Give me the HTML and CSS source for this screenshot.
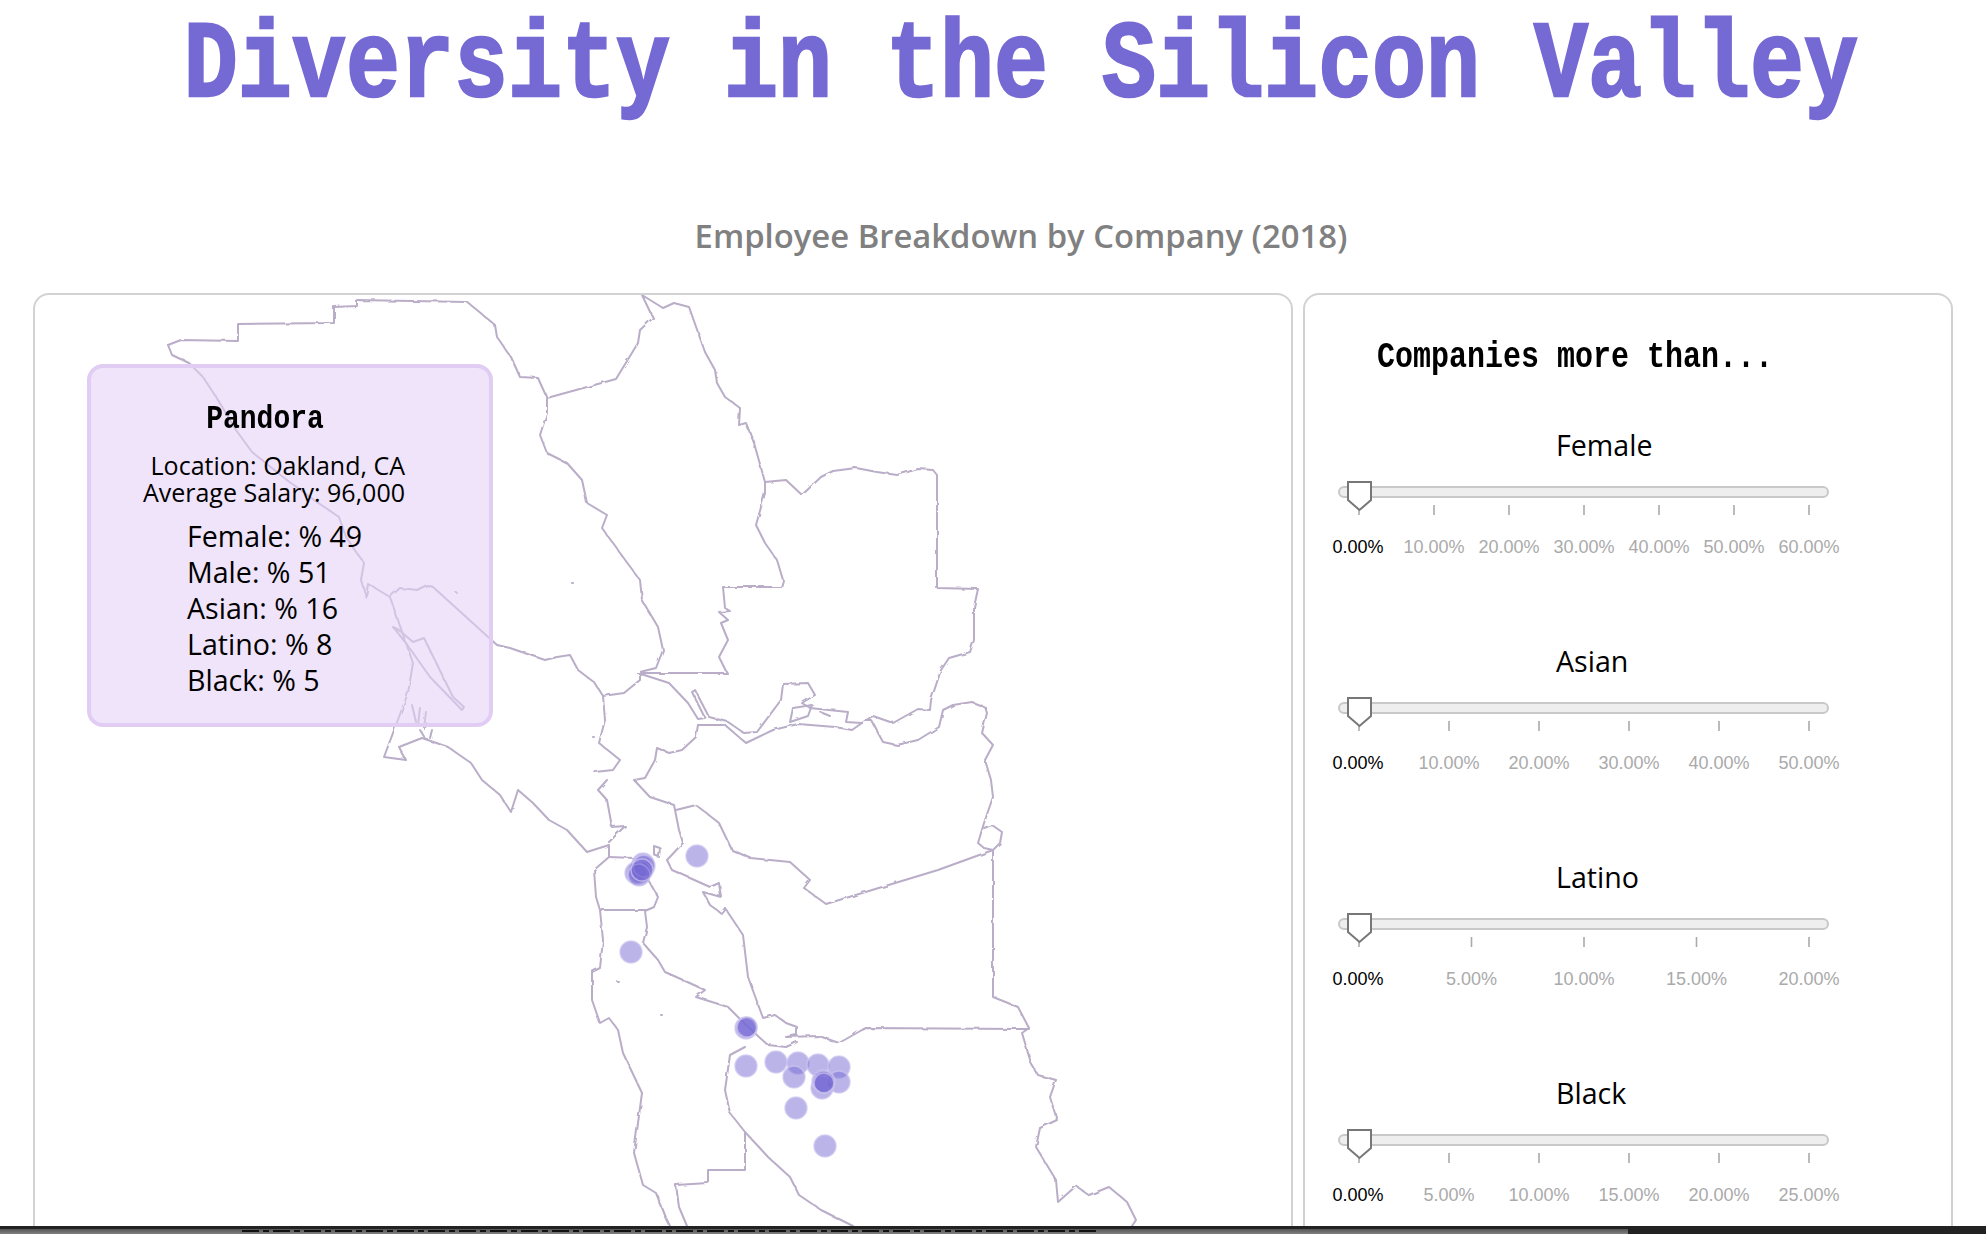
FILE: index.html
```html
<!DOCTYPE html>
<html lang="en">
<head>
    <meta charset="UTF-8">
    <title>Diversity in the Silicon Valley</title>
    <link rel="stylesheet" href="styles.css">
</head>
<body>
    <div class="header">
        <h1 class="title">Diversity in the Silicon Valley</h1>
        <h2 class="subtitle">Employee Breakdown by Company (2018)</h2>
    </div>

    <div class="panels">
        <div class="panel map-panel">
            <svg class="map" viewBox="35 295 1256 960">
                <defs>
                    <filter id="rough" x="35" y="295" width="1256" height="960" filterUnits="userSpaceOnUse">
                        <feTurbulence type="fractalNoise" baseFrequency="0.1" numOctaves="2" seed="4"/>
                        <feDisplacementMap in="SourceGraphic" scale="3"/>
                    </filter>
                </defs>
                <g class="county">
                    <path d="M168 345L181 340L238 341L238 324L334 323L334 307L357 306L357 300L467 302L477 310L495 325L497 337L511 357L520 377L538 378L547 398L547 413L540 435L547 453L567 463L582 480L587 503L607 515L602 528L620 553L640 580L642 600L658 627L663 650L656 668L640 672"/>
                    <path d="M547 398L616 379L638 343L640 330L653 318L642 295L663 308L674 303L689 307L705 352L715 370L717 383L725 397L740 408L739 425L746 423L754 443L765 482"/>
                    <path d="M765 482L786 480L802 495L821 477L833 471L856 468L877 472L897 475L918 469L933 470L937 475L937 588L978 589L974 607L974 640L970 652L949 658L941 670L931 700L930 710L918 709L893 723L873 716L866 720"/>
                    <path d="M765 482L765 493L756 525L765 543L777 560L783 580L781 587L723 587L725 608L730 611L719 612L728 620L721 623L728 640L719 657L727 673L638 673"/>
                    <path d="M640 673L640 680L624 693L603 696L595 683L578 670L570 655L557 657L545 660L510 648L497 645L433 587L427 585L417 590L400 588L390 597"/>
                    <path d="M168 345L172 355L189 363L203 377L218 400L236 430L252 452L283 477L314 500L339 517L346 537L364 563L361 580L366 597L368 584L375 588L390 597L399 623L413 663L408 693L384 757L406 760L399 747L422 738L448 747L471 763L482 780L500 795L511 812L518 790L533 803L549 820L567 830L587 852L609 845L609 857L594 870L596 897L600 910L603 940L600 968L592 972L592 1000L600 1023L609 1018L618 1030L623 1053L642 1093L634 1153L643 1185L656 1193L667 1220L670 1226"/>
                    <path d="M393 627L406 643L430 677L462 710L464 707L453 697L424 638L413 642L399 630Z"/>
                    <path d="M412 705L416 722M420 708L418 725M426 712L424 728M420 730L425 738M432 730L430 738"/>
                    <path d="M600 910L647 910"/>
                    <path d="M609 857L634 858L650 883L658 897L654 907L645 911L647 927L643 943L658 960L665 972L683 980L705 990L696 997L728 1007L743 1022L759 1037L768 1045L786 1047L797 1042"/>
                    <path d="M745 1047L730 1055L725 1090L730 1113L745 1132L768 1157L790 1177L799 1195L821 1210L853 1226"/>
                    <path d="M745 1132L745 1170L708 1170L708 1183L676 1185L679 1207L687 1226"/>
                    <path d="M725 908L743 935L748 977L763 1018L775 1015L786 1023L797 1027L797 1035L786 1037L819 1036L839 1043L862 1030L866 1028L1029 1029"/>
                    <path d="M676 810L696 805L719 823L732 850L750 858L790 862L810 880L804 888L826 904L938 870L993 850L993 997L1018 1007L1029 1028L1022 1033L1031 1063L1038 1075L1056 1080L1050 1097L1057 1120L1040 1128L1036 1147L1056 1180L1058 1202L1076 1186L1089 1195L1109 1187L1127 1202L1136 1220L1132 1226"/>
                    <path d="M985 707L987 713L982 733L993 745L985 760L991 780L993 797L984 823L978 843L984 848L993 850"/>
                    <path d="M985 707L972 702L953 705L943 710L939 727L918 740L897 745L883 742L871 720L866 720"/>
                    <path d="M984 828L992 825L1002 832L1000 843L993 850"/>
                    <path d="M638 673L669 683L688 703L698 719L705 718L692 692L695 690L709 717L728 722L744 733L757 732L781 700L783 684L808 683L815 695L802 703L810 708L848 712L846 722L862 723L866 720"/>
                    <path d="M790 722L793 708L812 705L808 716L790 722M820 712L830 716"/>
                    <path d="M698 725L725 725L746 743L773 730L798 724L835 727L852 730L862 723"/>
                    <path d="M698 725L696 737L682 750L669 753L657 748L655 760L645 778L634 780L650 797L674 805L679 830L683 843L667 860L672 870L710 887L719 883L721 897L703 892L710 905L721 913L725 908"/>
                    <path d="M603 696L605 720L599 743L620 760L613 770L595 772M607 780L598 790L607 800L612 827L625 826L609 842"/>
                    <path d="M654 846L660 848L659 857L654 855Z"/>
                    <path d="M618 982H619M572 583H573M456 593H457M593 737H594M661 1015H662"/>
                </g>
                <g class="dots">
                    <circle cx="697" cy="856" r="11"/>
                    <circle cx="643" cy="864" r="11"/>
                    <circle cx="642" cy="867" r="11"/>
                    <circle cx="641" cy="869" r="11"/>
                    <circle cx="640" cy="872" r="11"/>
                    <circle cx="636" cy="873" r="11"/>
                    <circle cx="644" cy="866" r="11"/>
                    <circle cx="639" cy="875" r="11"/>
                    <circle cx="642" cy="870" r="11"/>
                    <circle cx="631" cy="952" r="11"/>
                    <circle cx="746" cy="1028" r="11"/>
                    <circle cx="746" cy="1028" r="10"/>
                    <circle cx="747" cy="1027" r="10"/>
                    <circle cx="746" cy="1066" r="11"/>
                    <circle cx="776" cy="1062" r="11"/>
                    <circle cx="798" cy="1063" r="11"/>
                    <circle cx="794" cy="1077" r="11"/>
                    <circle cx="818" cy="1065" r="11"/>
                    <circle cx="839" cy="1067" r="11"/>
                    <circle cx="839" cy="1082" r="11"/>
                    <circle cx="822" cy="1088" r="11"/>
                    <circle cx="823" cy="1081" r="11"/>
                    <circle cx="824" cy="1082" r="11"/>
                    <circle cx="824" cy="1083" r="10"/>
                    <circle cx="796" cy="1108" r="11"/>
                    <circle cx="825" cy="1146" r="11"/>
                </g>
            </svg>

            <div class="tooltip">
                <h3 class="tooltip-name">Pandora</h3>
                <div class="tooltip-info">
                    <p>Location: Oakland, CA</p>
                    <p>Average Salary: 96,000</p>
                </div>
                <ul class="tooltip-stats">
                    <li>Female: % 49</li>
                    <li>Male: % 51</li>
                    <li>Asian: % 16</li>
                    <li>Latino: % 8</li>
                    <li>Black: % 5</li>
                </ul>
            </div>
        </div>

        <div class="panel filter-panel">
            <h3 class="filter-title">Companies more than...</h3>

            <div class="filter">
                <div class="filter-label">Female</div>
                <svg class="slider" width="540" height="90">
                    <rect class="track" x="9" y="12" width="489" height="10" rx="5"/>
                    <path class="tick" d="M29 30V40M104 30V40M179 30V40M254 30V40M329 30V40M404 30V40M479 30V40"/>
                    <path class="handle" d="M18 7H41V25L29.5 35L18 25Z"/>
                    <text class="tick-label active" x="28" y="78">0.00%</text>
                    <text class="tick-label" x="104" y="78">10.00%</text>
                    <text class="tick-label" x="179" y="78">20.00%</text>
                    <text class="tick-label" x="254" y="78">30.00%</text>
                    <text class="tick-label" x="329" y="78">40.00%</text>
                    <text class="tick-label" x="404" y="78">50.00%</text>
                    <text class="tick-label" x="479" y="78">60.00%</text>
                </svg>
            </div>

            <div class="filter">
                <div class="filter-label">Asian</div>
                <svg class="slider" width="540" height="90">
                    <rect class="track" x="9" y="12" width="489" height="10" rx="5"/>
                    <path class="tick" d="M29 30V40M119 30V40M209 30V40M299 30V40M389 30V40M479 30V40"/>
                    <path class="handle" d="M18 7H41V25L29.5 35L18 25Z"/>
                    <text class="tick-label active" x="28" y="78">0.00%</text>
                    <text class="tick-label" x="119" y="78">10.00%</text>
                    <text class="tick-label" x="209" y="78">20.00%</text>
                    <text class="tick-label" x="299" y="78">30.00%</text>
                    <text class="tick-label" x="389" y="78">40.00%</text>
                    <text class="tick-label" x="479" y="78">50.00%</text>
                </svg>
            </div>

            <div class="filter">
                <div class="filter-label">Latino</div>
                <svg class="slider" width="540" height="90">
                    <rect class="track" x="9" y="12" width="489" height="10" rx="5"/>
                    <path class="tick" d="M29 30V40M141.5 30V40M254 30V40M366.5 30V40M479 30V40"/>
                    <path class="handle" d="M18 7H41V25L29.5 35L18 25Z"/>
                    <text class="tick-label active" x="28" y="78">0.00%</text>
                    <text class="tick-label" x="141.5" y="78">5.00%</text>
                    <text class="tick-label" x="254" y="78">10.00%</text>
                    <text class="tick-label" x="366.5" y="78">15.00%</text>
                    <text class="tick-label" x="479" y="78">20.00%</text>
                </svg>
            </div>

            <div class="filter">
                <div class="filter-label">Black</div>
                <svg class="slider" width="540" height="90">
                    <rect class="track" x="9" y="12" width="489" height="10" rx="5"/>
                    <path class="tick" d="M29 30V40M119 30V40M209 30V40M299 30V40M389 30V40M479 30V40"/>
                    <path class="handle" d="M18 7H41V25L29.5 35L18 25Z"/>
                    <text class="tick-label active" x="28" y="78">0.00%</text>
                    <text class="tick-label" x="119" y="78">5.00%</text>
                    <text class="tick-label" x="209" y="78">10.00%</text>
                    <text class="tick-label" x="299" y="78">15.00%</text>
                    <text class="tick-label" x="389" y="78">20.00%</text>
                    <text class="tick-label" x="479" y="78">25.00%</text>
                </svg>
            </div>
        </div>
    </div>

    <div class="window-edge">
        <div class="window-edge-gray">
            <div class="window-edge-text"></div>
        </div>
    </div>
</body>
</html>
```

FILE: styles.css
```css
* {
    box-sizing: border-box;
    margin: 0;
    padding: 0;
}

html,
body {
    height: 100%;
    overflow: hidden;
}

body {
    position: relative;
    background-color: white;
    font-family: 'Open Sans', 'Noto Sans', sans-serif;
    color: black;
}

.header {
    height: 293px;
    padding-left: 56px;
    text-align: center;
}

.title {
    height: 150px;
    padding-top: 5px;
    font-family: 'Liberation Mono', monospace;
    font-size: 90px;
    line-height: 100px;
    font-weight: bold;
    color: #7569d4;
    -webkit-text-stroke: 2px #7569d4;
    transform: scaleY(1.22);
    transform-origin: top;
}

.subtitle {
    padding-top: 64px;
    font-size: 32.8px;
    line-height: 44px;
    font-weight: 600;
    color: #808080;
}

.panels {
    display: grid;
    grid-template-columns: 1260px 650px;
    gap: 10px;
    padding-left: 33px;
}

.panel {
    position: relative;
    height: 1000px;
    border: 2px solid #d2d2d2;
    border-radius: 16px;
    overflow: hidden;
}

.map {
    display: block;
    width: 1256px;
    height: 960px;
}

.county {
    filter: url(#rough);
}

.county path {
    fill: none;
    stroke: #b9adc8;
    stroke-width: 2;
    stroke-linejoin: round;
    stroke-linecap: round;
}

.dots circle {
    fill: #7569d4;
    fill-opacity: 0.5;
    stroke: #cfc6f0;
    stroke-width: 1.5;
    stroke-opacity: 0.7;
}

.tooltip {
    position: absolute;
    top: 69px;
    left: 52px;
    width: 406px;
    height: 363px;
    padding-top: 35px;
    background-color: rgba(229, 210, 245, 0.6);
    border: 4px solid #e1cdf3;
    border-radius: 16px;
}

.tooltip-name {
    height: 49px;
    padding-right: 50px;
    font-family: 'Liberation Mono', monospace;
    font-size: 28px;
    line-height: 36px;
    text-align: center;
    transform: scaleY(1.2);
}

.tooltip-info {
    padding-right: 84px;
    font-size: 25px;
    line-height: 27px;
    text-align: right;
}

.tooltip-stats {
    margin-top: 12px;
    padding-left: 96px;
    font-size: 28.6px;
    line-height: 36px;
    list-style: none;
}

.filter-panel {
    padding: 41px 0 0 25px;
}

.filter-title {
    height: 89px;
    padding-left: 47px;
    font-family: 'Liberation Mono', monospace;
    font-size: 30px;
    line-height: 42px;
    transform: scaleY(1.2);
    transform-origin: 0 21px;
}

.filter {
    height: 216px;
}

.filter-label {
    height: 50px;
    padding-left: 226px;
    font-size: 28.6px;
    line-height: 40px;
}

.slider {
    display: block;
}

.track {
    fill: #eeeeee;
    stroke: #c8c8c8;
    stroke-width: 2;
}

.tick {
    fill: none;
    stroke: #aaaaaa;
    stroke-width: 1.6;
}

.handle {
    fill: white;
    stroke: #777777;
    stroke-width: 2;
}

.tick-label {
    font-family: 'Liberation Sans', Arial, sans-serif;
    font-size: 18px;
    fill: #aaaaaa;
    text-anchor: middle;
}

.tick-label.active {
    fill: black;
}

.window-edge {
    position: absolute;
    left: 0;
    right: 0;
    bottom: 0;
    height: 8px;
    background-color: #222222;
}

.window-edge-gray {
    width: 1628px;
    height: 5px;
    margin-top: 3px;
    padding: 1px 528px 0 242px;
    background: linear-gradient(#555555, #808080);
}

.window-edge-text {
    height: 2px;
    background: repeating-linear-gradient(90deg, #111111 0 17px, transparent 17px 21px, #111111 21px 27px, transparent 27px 31px);
}
```
